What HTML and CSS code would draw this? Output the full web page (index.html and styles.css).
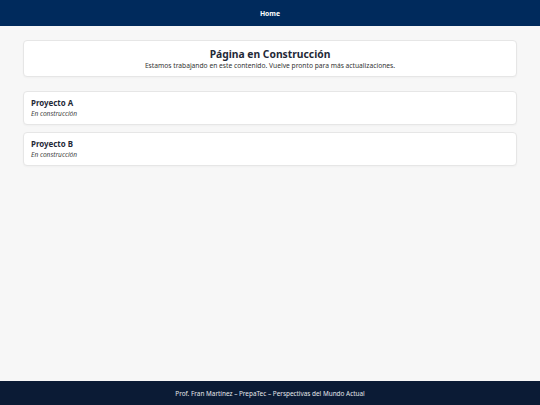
FILE: index.html
```html
<!DOCTYPE html>
<html lang="es">
<head>
<meta charset="utf-8">
<title>Home</title>
<link rel="stylesheet" href="styles.css">
</head>
<body>
<header class="topbar"><span class="topbar-title">Home</span></header>
<main class="content">
  <section class="card hero">
    <h1 class="hero-title">Página en Construcción</h1>
    <p class="hero-text">Estamos trabajando en este contenido. Vuelve pronto para más actualizaciones.</p>
  </section>
  <div class="projects">
    <section class="card project">
      <h2 class="project-title">Proyecto A</h2>
      <p class="project-status">En construcción</p>
    </section>
    <section class="card project">
      <h2 class="project-title">Proyecto B</h2>
      <p class="project-status">En construcción</p>
    </section>
  </div>
</main>
<footer class="footer">Prof. Fran Martínez – PrepaTec – Perspectivas del Mundo Actual</footer>
</body>
</html>
```
FILE: styles.css
```css
* { box-sizing: border-box; }
html, body { height: 100%; }
body {
  margin: 0;
  font-family: "Noto Sans", "Open Sans", sans-serif;
  background: #f7f7f7;
  color: #1f2937;
  display: flex;
  flex-direction: column;
}
.topbar {
  height: 26px;
  background: #002a5c;
  display: flex;
  align-items: center;
  justify-content: center;
}
.topbar-title {
  color: #ffffff;
  font-weight: 700;
  font-size: 6.8px;
}
.content {
  flex: 1;
  padding: 14px 23px;
}
.card {
  background: #ffffff;
  border: 1px solid #e6e6e6;
  border-radius: 4px;
  box-shadow: 0 1px 2px rgba(0,0,0,0.03);
}
.hero {
  height: 37px;
  text-align: center;
  padding-top: 7px;
  margin-bottom: 14px;
}
.hero-title {
  margin: 0;
  font-size: 10.3px;
  font-weight: 700;
  line-height: 13px;
  color: #1f2937;
}
.hero-text {
  margin: 0;
  font-size: 6.7px;
  line-height: 10px;
  color: #333;
}
.projects {
  display: flex;
  flex-direction: column;
  gap: 7px;
}
.project {
  height: 34px;
  padding: 5px 7px;
}
.project-title {
  margin: 0;
  font-size: 7.9px;
  font-weight: 700;
  line-height: 12px;
  color: #1f2937;
}
.project-status {
  margin: 0;
  font-size: 6.6px;
  font-style: italic;
  line-height: 9px;
  color: #444;
}
.footer {
  height: 24px;
  background: #0b1b35;
  color: #e5e7eb;
  font-size: 6.4px;
  display: flex;
  align-items: center;
  justify-content: center;
}
```
